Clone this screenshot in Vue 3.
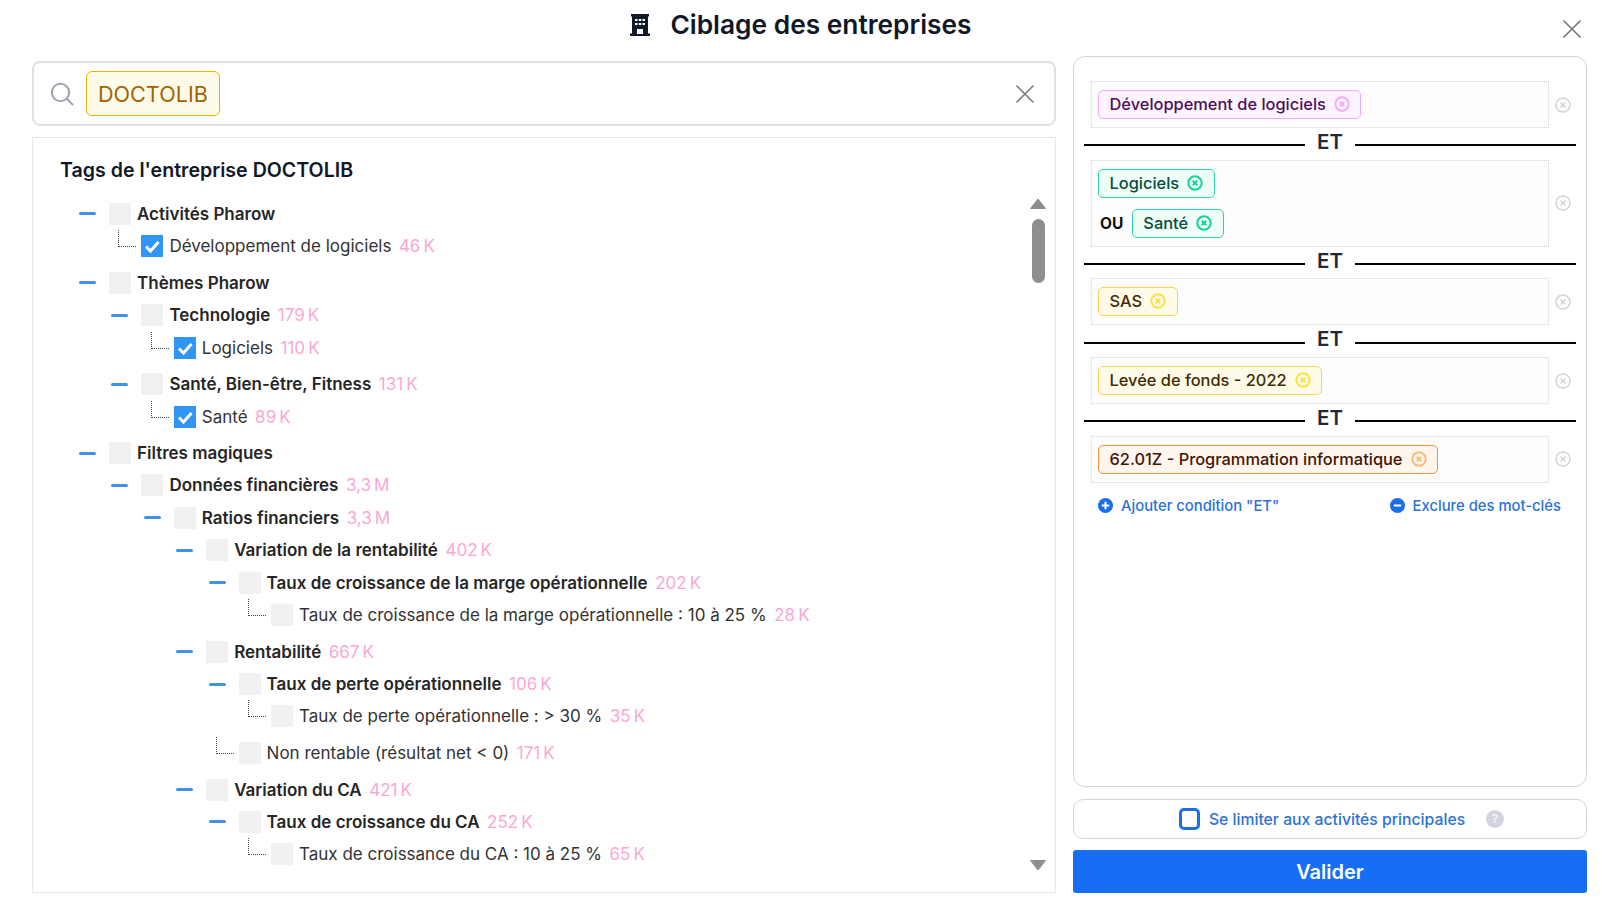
<script setup>
import { computed } from 'vue';

// arbre des tags
const nodes = [
  { label: 'Activités Pharow', lvl: 0 },
  { label: 'Développement de logiciels', count: '46 K', lvl: 1, leaf: true, checked: true },
  { label: 'Thèmes Pharow', lvl: 0 },
  { label: 'Technologie', count: '179 K', lvl: 1 },
  { label: 'Logiciels', count: '110 K', lvl: 2, leaf: true, checked: true },
  { label: 'Santé, Bien-être, Fitness', count: '131 K', lvl: 1 },
  { label: 'Santé', count: '89 K', lvl: 2, leaf: true, checked: true },
  { label: 'Filtres magiques', lvl: 0 },
  { label: 'Données financières', count: '3,3 M', lvl: 1 },
  { label: 'Ratios financiers', count: '3,3 M', lvl: 2 },
  { label: 'Variation de la rentabilité', count: '402 K', lvl: 3 },
  { label: 'Taux de croissance de la marge opérationnelle', count: '202 K', lvl: 4 },
  { label: 'Taux de croissance de la marge opérationnelle : 10 à 25 %', count: '28 K', lvl: 5, leaf: true },
  { label: 'Rentabilité', count: '667 K', lvl: 3 },
  { label: 'Taux de perte opérationnelle', count: '106 K', lvl: 4 },
  { label: 'Taux de perte opérationnelle : > 30 %', count: '35 K', lvl: 5, leaf: true },
  { label: 'Non rentable (résultat net < 0)', count: '171 K', lvl: 4, leaf: true },
  { label: 'Variation du CA', count: '421 K', lvl: 3 },
  { label: 'Taux de croissance du CA', count: '252 K', lvl: 4 },
  { label: 'Taux de croissance du CA : 10 à 25 %', count: '65 K', lvl: 5, leaf: true }
];

const rows = computed(() =>
  nodes.map((n, i) => ({
    ...n,
    indent: n.lvl * 32.4,
    spaced: i > 0 && nodes[i - 1].leaf,
    count: n.count ? n.count.replace(' ', '\u202f') : ''
  }))
);

// conditions de droite
const groups = [
  { chips: [{ label: 'Développement de logiciels', kind: 'pink' }] },
  { chips: [{ label: 'Logiciels', kind: 'green' }, { label: 'Santé', kind: 'green', ou: true }] },
  { chips: [{ label: 'SAS', kind: 'yellow' }] },
  { chips: [{ label: 'Levée de fonds - 2022', kind: 'yellow' }] },
  { chips: [{ label: '62.01Z - Programmation informatique', kind: 'orange' }] }
];
</script>

<template>
  <div class="page">
    <header class="header">
      <svg class="building" width="20" height="22" viewBox="0 0 20 22">
        <rect x="1" y="0" width="18" height="2.5" fill="#111827" />
        <rect x="2" y="2" width="16" height="18" fill="#111827" />
        <rect x="0" y="19.5" width="20" height="2.5" fill="#111827" />
        <rect x="5" y="5" width="2.5" height="2" fill="#fff" />
        <rect x="8.8" y="5" width="2.5" height="2" fill="#fff" />
        <rect x="12.5" y="5" width="2.5" height="2" fill="#fff" />
        <rect x="5" y="9" width="2.5" height="2" fill="#fff" />
        <rect x="8.8" y="9" width="2.5" height="2" fill="#fff" />
        <rect x="12.5" y="9" width="2.5" height="2" fill="#fff" />
        <rect x="7" y="15" width="6" height="5" fill="#fff" />
      </svg>
      <h1 class="title">Ciblage des entreprises</h1>
      <svg class="close" width="20" height="20" viewBox="0 0 20 20">
        <path d="M1.5 1.5 L18.5 18.5 M18.5 1.5 L1.5 18.5" stroke="#777" stroke-width="1.6" fill="none" />
      </svg>
    </header>

    <main class="columns">
      <section class="left">
        <div class="search">
          <svg class="search-icon" width="24" height="24" viewBox="0 0 24 24">
            <circle cx="10.5" cy="10.5" r="8.7" fill="none" stroke="#9ca3af" stroke-width="2" />
            <path d="M17 17 L22.5 22.5" stroke="#9ca3af" stroke-width="2" stroke-linecap="round" />
          </svg>
          <span class="search-chip">DOCTOLIB</span>
          <svg class="search-clear" width="20" height="20" viewBox="0 0 20 20">
            <path d="M1.5 1.5 L18.5 18.5 M18.5 1.5 L1.5 18.5" stroke="#7d7d7d" stroke-width="1.6" fill="none" />
          </svg>
        </div>

        <div class="panel">
          <div class="tree">
            <h2 class="tree-title">Tags de l'entreprise DOCTOLIB</h2>
            <div
              v-for="row in rows"
              :key="row.label"
              class="row"
              :class="{ spaced: row.spaced }"
              :style="{ paddingLeft: row.indent + 'px' }"
            >
              <span class="slot">
                <span v-if="row.leaf" class="connector"></span>
                <span v-else class="dash"></span>
              </span>
              <span class="box" :class="{ checked: row.checked }">
                <svg v-if="row.checked" width="22" height="22" viewBox="0 0 22 22">
                  <path d="M5 11.5 L9.5 16 L17.5 7" fill="none" stroke="#fff" stroke-width="3" />
                </svg>
              </span>
              <span class="label" :class="{ bold: !row.leaf }">{{ row.label }}</span>
              <span v-if="row.count" class="count">{{ row.count }}</span>
            </div>
          </div>
          <div class="scrollbar">
            <svg width="16" height="11" viewBox="0 0 16 11"><path d="M8 1 L15.5 10.5 H0.5 Z" fill="#8e8e8e" stroke="#8e8e8e" stroke-linejoin="round" /></svg>
            <span class="thumb"></span>
            <span class="track"></span>
            <svg width="16" height="11" viewBox="0 0 16 11"><path d="M8 10 L15.5 0.5 H0.5 Z" fill="#8e8e8e" stroke="#8e8e8e" stroke-linejoin="round" /></svg>
          </div>
        </div>
      </section>

      <aside class="right">
        <div class="conditions">
          <template v-for="(g, i) in groups" :key="i">
            <div v-if="i > 0" class="sep">
              <span class="sep-line"></span>
              <span class="sep-text">ET</span>
              <span class="sep-line"></span>
            </div>
            <div class="group-row">
              <div class="group">
                <div v-for="c in g.chips" :key="c.label" class="chip-line">
                  <span v-if="c.ou" class="ou">OU</span>
                  <span class="chip" :class="c.kind">
                    {{ c.label }}
                    <svg class="chip-x" width="16" height="16" viewBox="0 0 16 16">
                      <circle cx="8" cy="8" r="6.7" fill="none" stroke="currentColor" stroke-width="2" />
                      <path d="M5.8 5.8 L10.2 10.2 M10.2 5.8 L5.8 10.2" stroke="currentColor" stroke-width="2" />
                    </svg>
                  </span>
                </div>
              </div>
              <svg class="group-x" width="16" height="16" viewBox="0 0 16 16">
                <circle cx="8" cy="8" r="7" fill="none" stroke="#d4d4d8" stroke-width="1.6" />
                <path d="M5.5 5.5 L10.5 10.5 M10.5 5.5 L5.5 10.5" stroke="#d4d4d8" stroke-width="1.6" />
              </svg>
            </div>
          </template>

          <div class="links">
            <span class="link">
              <svg width="15" height="15" viewBox="0 0 15 15">
                <circle cx="7.5" cy="7.5" r="7.5" fill="#1a6fe8" />
                <path d="M7.5 3.8 V11.2 M3.8 7.5 H11.2" stroke="#fff" stroke-width="2" />
              </svg>
              Ajouter condition "ET"
            </span>
            <span class="link">
              <svg width="15" height="15" viewBox="0 0 15 15">
                <circle cx="7.5" cy="7.5" r="7.5" fill="#1a6fe8" />
                <path d="M3.8 7.5 H11.2" stroke="#fff" stroke-width="2" />
              </svg>
              Exclure des mot-clés
            </span>
          </div>
        </div>

        <label class="limit">
          <span class="limit-box"></span>
          <span class="limit-text">Se limiter aux activités principales</span>
          <span class="help">?</span>
        </label>

        <button class="submit">Valider</button>
      </aside>
    </main>
  </div>
</template>

<style scoped>
.page {
  position: relative;
  width: 1602px;
  height: 916px;
  overflow: hidden;
  background: #fff;
  font-family: Inter, "Noto Sans", sans-serif;
  color: #111827;
}

.header {
  display: flex;
  justify-content: center;
  align-items: center;
  gap: 20px;
  height: 48px;
  padding-top: 1px;
  box-sizing: border-box;
}

.title {
  margin: 0;
  font-size: 26.3px;
  font-weight: 600;
  line-height: 47px;
}

.close {
  position: absolute;
  top: 19px;
  right: 20px;
}

.columns {
  display: flex;
  gap: 17px;
  padding: 8px 0 0 32px;
}

/* colonne gauche */
.left {
  width: 1024px;
  padding-top: 5px;
}

.search {
  display: flex;
  align-items: center;
  height: 65px;
  padding: 0 19px 0 16px;
  border: 2px solid #dfe1e5;
  border-radius: 8px;
  box-sizing: border-box;
}

.search-icon {
  margin-right: 12px;
}

.search-chip {
  padding: 0 11px;
  height: 45px;
  box-sizing: border-box;
  line-height: 45px;
  font-size: 21.6px;
  color: #a16207;
  background: #fefce8;
  border: 1px solid #eab308;
  border-radius: 6px;
}

.search-clear {
  margin-left: auto;
}

.panel {
  display: flex;
  justify-content: space-between;
  height: 756px;
  margin-top: 11px;
  box-sizing: border-box;
  border: 1px solid #e5e7eb;
}

.tree {
  padding: 18px 0 0 27px;
}

.tree-title {
  margin: 0 0 13.6px;
  font-size: 19.6px;
  font-weight: 600;
  line-height: 28px;
  color: #111827;
}

.row {
  display: flex;
  align-items: center;
  height: 32.4px;
  margin-left: 19px;
  font-size: 17px;
  white-space: nowrap;
}

.row.spaced {
  margin-top: 4.2px;
}

.slot {
  display: flex;
  align-items: center;
  width: 30px;
  flex: none;
}

.dash {
  width: 17px;
  height: 3px;
  background: #3b94e6;
  border-radius: 2px;
}

.connector {
  width: 18px;
  height: 17px;
  margin: 0 0 15px 7px;
  box-sizing: border-box;
  border-left: 1px dotted #444;
  border-bottom: 1px dotted #444;
}

.box {
  width: 22px;
  height: 22px;
  flex: none;
  background: #f1f1f1;
}

.box.checked {
  background: #2f96f3;
}

.box svg {
  display: block;
}

.label {
  margin-left: 6px;
  color: #333;
}

.label.bold {
  font-weight: 600;
  color: #262626;
}

.count {
  margin-left: 7.5px;
  color: #f9a8d4;
}

.scrollbar {
  display: flex;
  flex-direction: column;
  align-items: center;
  width: 16px;
  margin: 60px 9px 0 0;
  height: 673px;
}

.thumb {
  width: 13px;
  height: 64px;
  margin-top: 10px;
  background: #8e8e8e;
  border-radius: 7px;
}

.track {
  flex: 1;
}

/* colonne droite */
.right {
  display: flex;
  flex-direction: column;
  width: 514px;
}

.conditions {
  height: 731px;
  box-sizing: border-box;
  padding: 24px 10px 0;
  border: 1px solid #d4d4d8;
  border-radius: 12px;
}

.group-row {
  display: flex;
  align-items: center;
}

.group {
  display: flex;
  flex-direction: column;
  justify-content: center;
  gap: 11px;
  width: 458px;
  margin-left: 7px;
  padding: 8px 6px;
  box-sizing: border-box;
  background: #fdfdfd;
  border: 1px dotted #d4d4d8;
}

.chip-line {
  display: flex;
  align-items: center;
}

.ou {
  margin: 0 8.5px 0 2px;
  font-size: 15.5px;
  font-weight: 700;
  color: #111;
}

.chip {
  display: inline-flex;
  align-items: center;
  gap: 8px;
  height: 29px;
  box-sizing: border-box;
  padding: 0 10.5px 1px;
  font-size: 16.4px;
  font-weight: 500;
  border: 1px solid;
  border-radius: 5px;
}

.chip.pink {
  color: #4e0f5c;
  background: #fdf4ff;
  border-color: #f0abfc;
}

.chip.pink .chip-x {
  color: #f0abfc;
}

.chip.green {
  color: #064e3b;
  background: #effdf7;
  border-color: #2dd4a7;
}

.chip.green .chip-x {
  color: #10d39a;
}

.chip.yellow {
  color: #422c06;
  background: #fefce8;
  border-color: #fcd34d;
}

.chip.yellow .chip-x {
  color: #fde047;
}

.chip.orange {
  color: #431407;
  background: #fff7ed;
  border-color: #fb923c;
}

.chip.orange .chip-x {
  color: #fdba74;
}

.group-x {
  margin-left: 6px;
}

.sep {
  display: flex;
  align-items: center;
  justify-content: space-between;
  height: 31.7px;
  padding-top: 3px;
  box-sizing: border-box;
}

.sep-line {
  width: 221px;
  height: 2px;
  background: #000;
}

.sep-text {
  font-size: 20.5px;
  font-weight: 600;
  line-height: 24px;
  margin-top: -7px;
  color: #1f2937;
}

.links {
  display: flex;
  justify-content: space-between;
  margin: 13px 15px 0 14px;
}

.link {
  display: inline-flex;
  align-items: center;
  gap: 8px;
  font-size: 14.8px;
  font-weight: 500;
  line-height: 20px;
  color: #2b72d8;
}

.limit {
  display: flex;
  align-items: center;
  justify-content: center;
  height: 40px;
  margin-top: 12px;
  padding-left: 23px;
  box-sizing: border-box;
  border: 1px solid #d4d4d8;
  border-radius: 10px;
}

.limit-box {
  width: 21px;
  height: 22px;
  box-sizing: border-box;
  border: 3px solid #1f6fe0;
  border-radius: 5px;
}

.limit-text {
  margin-left: 9px;
  font-size: 15.75px;
  font-weight: 500;
  color: #2b72d8;
}

.help {
  width: 18px;
  height: 18px;
  margin-left: 21px;
  text-align: center;
  font-size: 12px;
  font-weight: 600;
  line-height: 18px;
  color: #f5f5f5;
  background: #d1d5db;
  border-radius: 50%;
}

.submit {
  height: 43px;
  margin-top: 11px;
  padding: 0;
  border: none;
  border-radius: 3px;
  background: #166ef5;
  color: #fff;
  font-family: inherit;
  font-size: 20px;
  font-weight: 600;
}
</style>

<style>
html, body {
  margin: 0;
  background: #fff;
}
</style>
